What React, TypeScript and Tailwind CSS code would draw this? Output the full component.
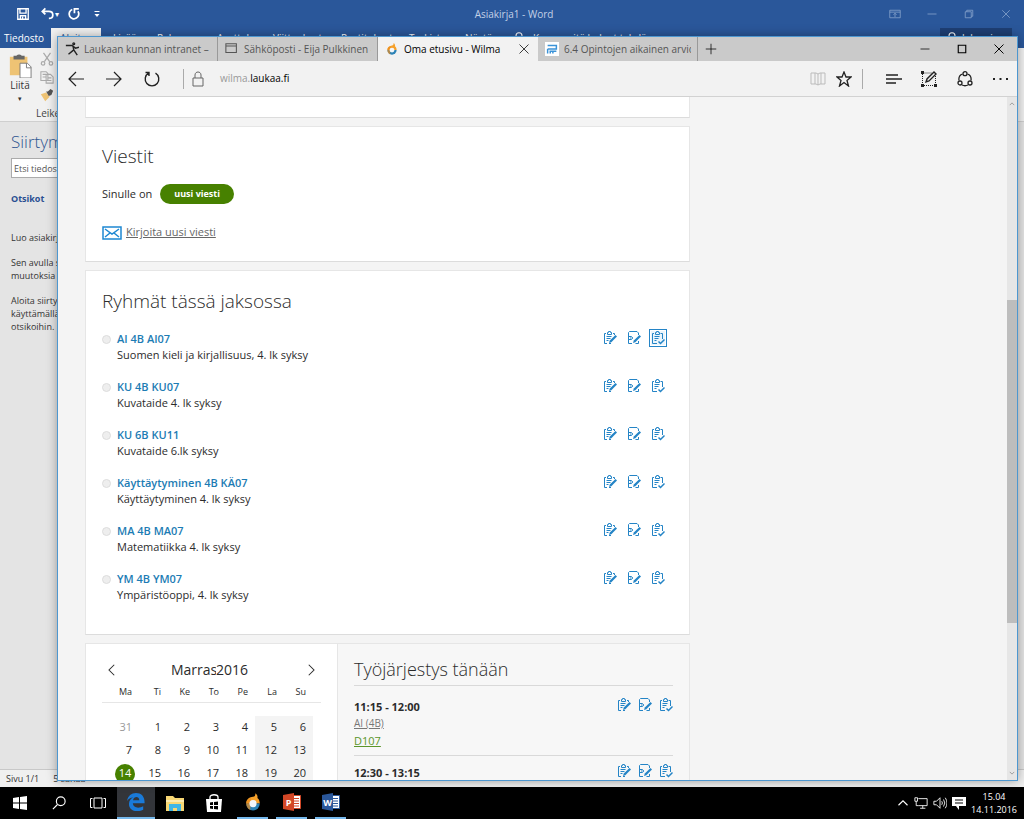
import React from "react";

type Kids = { children: React.ReactNode };

function Icon({ box = "0 0 16 16", className, children, width = 1 }: Kids & { box?: string; className: string; width?: number }) {
  return (
    <svg viewBox={box} className={`shrink-0 ${className}`} fill="none" stroke="currentColor" strokeWidth={width} aria-hidden="true">
      {children}
    </svg>
  );
}

const wordTabs = [
  ["Lisää", "w-11"],
  ["Rakenne", "w-15"],
  ["Asettelu", "w-14"],
  ["Viittaukset", "w-17"],
  ["Postitukset", "w-17"],
  ["Tarkista", "w-14"],
  ["Näytä", "w-12"],
];

function WordWindow() {
  return (
    <div className="flex h-full flex-col bg-[#e4e4e4] text-[10px] text-[#333]">
      <header className="shrink-0 bg-[#2a579a] text-white">
        <div className="flex h-7 items-center">
          <div className="flex flex-1 items-center pl-4">
            <button aria-label="Tallenna" className="mr-[11px]">
              <Icon className="h-3.5 w-3.5" width={1.5}><path d="M2 2h12v12H2zM4.500 2v5h7V2M5 14v-4h6v4M7.500 11v3" /></Icon>
            </button>
            <button aria-label="Kumoa">
              <Icon className="h-3.5 w-3.5" width={2}><path d="M5 1.500 1.500 5 5 8.500M2 5h7c6 0 6 8 0 8" /></Icon>
            </button>
            <span className="mr-2 text-[8px]">▾</span>
            <button aria-label="Toista" className="mr-3">
              <Icon className="h-3.5 w-3.5" width={2}><path d="M6 2.800a5.500 5.500 0 1 0 6.500 2M8.500 7V2h5" /></Icon>
            </button>
            <Icon className="h-2 w-2" width={2}><path d="M3 3h10" /><path d="M3 8h10l-5 6z" fill="currentColor" stroke="none" /></Icon>
          </div>
          <span className="text-[#c3d1e7]">Asiakirja1 - Word</span>
          <div className="flex flex-1 items-center justify-end gap-[25px] pr-3 text-[#8ea8cf]">
            <Icon className="h-3 w-3"><path d="M1 3h14v10H1zM1 5.500h14M8 12V7M6 9l2-2 2 2" /></Icon>
            <Icon className="h-3 w-3"><path d="M2 8h12" /></Icon>
            <Icon className="h-3 w-3"><path d="M3 5h8v8H3zM5 5V3h8v8h-2" /></Icon>
            <Icon className="h-3 w-3"><path d="m3 3 10 10M13 3 3 13" /></Icon>
          </div>
        </div>
        <nav className="flex h-5 items-center">
          <span className="w-[51px] pl-1">Tiedosto</span>
          <span className="flex h-5 w-[50px] items-center justify-center bg-[#f1f1f1] text-[#2a579a]">Aloitus</span>
          <span className="w-3" />
          {wordTabs.map(([name, w]) => <span key={name} className={w}>{name}</span>)}
          <Icon className="mr-2 h-3 w-3" width={1.5}><circle cx="8" cy="5" r="4" /><path d="M6 9v5h4V9" /></Icon>
          <span className="flex-1">Kerro, mitä haluat tehdä</span>
          <button className="mr-3 flex h-5 w-[72px] items-center gap-1 bg-[#1e3f74] pl-1.5">
            <Icon className="h-3 w-3" width={1.5}><circle cx="8" cy="5" r="4" /><path d="M2 15c1-6 11-6 12 0" /></Icon>
            Jakaminen
          </button>
        </nav>
      </header>
      <div className="flex h-[74px] shrink-0 border-b border-[#cfcfcf] bg-[#f1f1f1]">
        <div className="flex w-10 flex-col items-center pt-1.5">
          <svg viewBox="0 0 24 26" className="h-6 w-6" aria-hidden="true">
            <path d="M1 3h19v20H1z" fill="#eec374" />
            <path d="M5 2h3q3-3 6 0h3v4H5z" fill="#666" />
            <path d="M12 10h8l4 4v12H12z" fill="#fff" stroke="#777" />
            <path d="M19 10v5h5" fill="none" stroke="#777" />
          </svg>
          <span>Liitä</span>
          <span className="text-[7px] leading-3">▾</span>
        </div>
        <div className="flex flex-col gap-1 pt-1 text-[#aaa]">
          <Icon className="h-3.5 w-3.5" width={1.4}><path d="m4 1 7 10M12 1 5 11" /><circle cx="3.500" cy="13" r="2" /><circle cx="12.500" cy="13" r="2" /></Icon>
          <Icon className="h-3.5 w-3.5" width={1.2}><path d="M1 2h6l2 2v8H1zM3 5h4M3 8h4M7 5h5l3 3v7H7zM9 9h4M9 12h4" /></Icon>
          <svg viewBox="0 0 16 16" className="h-3.5 w-3.5" aria-hidden="true"><path d="m1 7 6-2 4 5-5 5z" fill="#eec374" /><path d="m7 4 3 5 3-1 2-5-3-2-3 3z" fill="#555" /></svg>
          <span className="-ml-1 text-[#444]">Leikepöytä</span>
        </div>
      </div>
      <aside className="flex-1 pt-1.5 pl-[11px] text-[9px] leading-[13px]">
        <h2 className="text-[17px] leading-7 font-light text-[#2f5590]">Siirtyminen</h2>
        <input aria-label="Etsi tiedostosta" placeholder="Etsi tiedostosta" className="mt-0.5 block h-5 w-40 border border-[#ababab] bg-white px-0.5 text-[9px] placeholder:text-[#555]" />
        <h3 className="mt-3.5 mb-[26px] font-bold text-[#2a4f92]">Otsikot</h3>
        <p className="mb-3">Luo asiakirjan jäsennys.</p>
        <p className="mb-3">Sen avulla seuraat<br />muutoksia helposti.</p>
        <p>Aloita siirtymällä<br />käyttämällä tyylejä<br />otsikoihin.</p>
      </aside>
      <footer className="flex h-[18px] shrink-0 items-center gap-3.5 border-t border-[#c8c8c8] bg-[#f0f0f0] pl-1.5 text-[9px]">
        <span>Sivu 1/1</span><span>5 sanaa</span>
      </footer>
    </div>
  );
}

function BrowserTab({ title, icon, active }: { title: string; icon: React.ReactNode; active?: boolean }) {
  return (
    <div className={active ? "flex w-40 min-w-0 items-center gap-1.5 bg-[#f2f2f2] px-2 text-black" : "flex w-40 min-w-0 items-center gap-[5px] border-r border-[#999] pr-1.5 pl-[7px] text-[#555]"}>
      {icon}
      <span className="flex-1 overflow-hidden whitespace-nowrap">{title}</span>
      {active && <button aria-label="Sulje välilehti"><Icon className="h-3 w-3"><path d="m2 2 12 12M14 2 2 14" /></Icon></button>}
    </div>
  );
}

function Wilma({ className }: { className: string }) {
  return (
    <svg viewBox="0 0 20 22" className={`shrink-0 ${className}`} aria-hidden="true">
      <path d="M1.500 13C1.500 7 6 5 10 4.500c2.500-.5 3-2 3-4.500 2.500 2 3 4 2.500 6 2 1.500 3 4 3 7z" fill="#f6a12a" />
      <path d="M1.500 13a8.500 8.500 0 0 0 17 0z" fill="#2c83b7" />
      <path d="M1.500 13c0 4 2 7 5 8l1-15c-4 1-6 3-6 7z" fill="#e98c1c" opacity=".7" />
      <circle cx="10" cy="13" r="4.500" fill="#f2f6fa" />
    </svg>
  );
}

function Toolbar() {
  return (
    <div className="flex h-9 shrink-0 items-center border-b border-[#d2d2d2] bg-[#f2f2f2] px-2 pl-2.5 text-[10px] text-[#222]">
      <button aria-label="Takaisin" className="mr-[22px]"><Icon className="h-4 w-4" width={1.2}><path d="M16 8H1M8 1 1 8l7 7" /></Icon></button>
      <button aria-label="Eteenpäin" className="mr-[22px]"><Icon className="h-4 w-4" width={1.2}><path d="M0 8h15M8 1l7 7-7 7" /></Icon></button>
      <button aria-label="Päivitä"><Icon className="h-4 w-4" width={1.4}><path d="M4.500 2.200a6.800 6.800 0 1 0 7 0M1.500 1.500h3.500V5" /></Icon></button>
      <span className="mr-2 ml-[23px] h-5 w-px bg-[#aaa]" />
      <Icon className="mr-4 h-4 w-3 text-[#666]" box="0 0 12 16"><path d="M1 7h10v8H1zM3 7V4c0-4 6-4 6 0v3" /></Icon>
      <span className="flex-1 text-[#999]">wilma.<span className="text-black">laukaa.fi</span></span>
      <Icon className="mr-2.5 h-4 w-4 text-[#bbb]"><path d="M1 2h5l2 1 2-1h5v11h-5l-2 1-2-1H1zM8 3v11M5 2v11M11 2v11" /></Icon>
      <button aria-label="Lisää suosikkeihin"><Icon className="h-4 w-4" width={1.3}><path d="m8 1 2 5h5l-4 3.500L12.500 15 8 11.500 3.500 15 5 9.500 1 6h5z" /></Icon></button>
      <span className="mr-[23px] ml-2.5 h-5 w-px bg-[#aaa]" />
      <button aria-label="Keskus" className="mr-[19px]"><Icon className="h-4 w-4" width={1.3}><path d="M0 4h12M0 8h16M0 12h10" /></Icon></button>
      <button aria-label="Muistiinpano" className="mr-5"><Icon className="h-4 w-4"><path d="M1.500 14V2h10M14.500 5v9.500h-13" strokeDasharray="1 1" /><path d="M0 0h3v3H0zM0 13h3v3H0zM13 13h3v3h-3z" fill="currentColor" stroke="none" /><path d="m5 11 1-3 7-7 2 2-7 7z" fill="#f2f2f2" strokeWidth="1.400" /></Icon></button>
      <button aria-label="Jaa" className="mr-5"><Icon className="h-4 w-4" width={1.3}><path d="M5.500 3C2.500 4 1.500 6 2 9.500M10.500 3c3 1 4 3 3.500 6.500M5 14q3 1.500 6 0" /><circle cx="8" cy="2.700" r="2" /><circle cx="3" cy="12" r="2" /><circle cx="13" cy="12" r="2" /></Icon></button>
      <button aria-label="Lisää toimintoja"><Icon className="h-4 w-4"><path d="M0 7h2v2H0zM6.500 7h2v2h-2zM13 7h2v2h-2z" fill="currentColor" stroke="none" /></Icon></button>
    </div>
  );
}

function Actions({ compact, focused }: { compact?: boolean; focused?: boolean }) {
  return (
    <div className={compact ? "flex gap-[7px] text-[#2484c6]" : "flex gap-2.5 text-[#2484c6]"}>
      <a href="#arviointi" aria-label="Arviointi"><Icon box="0 0 14 14" className="h-3.5 w-3.5"><path d="M3 2.500H1.500v10H4M10 2.500h1.500V4M6 12.500h2" /><path d="M4.500 3.500v-2h1v-1h2v1h1v2z" /><path d="M3.500 5.500h5M3.500 7.500h4M3.500 9.500h2" /><path d="m6 12 .8-2.500L12.500 4 14 5.500 8.300 11.200z" fill="currentColor" stroke="none" /></Icon></a>
      <a href="#tuntimerkinnat" aria-label="Tuntimerkinnät"><Icon box="0 0 14 14" className="h-3.5 w-3.5"><path d="M11.500 4V2L10 .5H2.500l-1 1v11H5M8.500 12.500h3V10" /><path d="M2 5.500h2.500q2.500 1.500 0 3H2M3 7h1.500" /><path d="m6 12 .8-2.500L12.500 4 14 5.500 8.300 11.200z" fill="currentColor" stroke="none" /></Icon></a>
      <a href="#poissaolot" aria-label="Poissaolot" className={focused ? "bg-[#eaf5fc] outline outline-offset-1 outline-[#2484c6]" : ""}><Icon box="0 0 14 14" className="h-3.5 w-3.5"><path d="M3 2.500H1.500v10H6M9.500 2.500h2V8" /><path d="M4.500 3.500v-2h1v-1h2v1h1v2z" /><path d="M3.500 5.500h5M3.500 7.500h4M3.500 9.500h2" /><path d="m7.500 10.500 2 2L13.500 8.500" strokeWidth="1.500" /></Icon></a>
    </div>
  );
}

const groups = [
  ["AI 4B AI07", "Suomen kieli ja kirjallisuus, 4. lk syksy"],
  ["KU 4B KU07", "Kuvataide 4. lk syksy"],
  ["KU 6B KU11", "Kuvataide 6.lk syksy"],
  ["Käyttäytyminen 4B KÄ07", "Käyttäytyminen 4. lk syksy"],
  ["MA 4B MA07", "Matematiikka 4. lk syksy"],
  ["YM 4B YM07", "Ympäristöoppi, 4. lk syksy"],
];

const weeks = [
  [31, 1, 2, 3, 4, 5, 6],
  [7, 8, 9, 10, 11, 12, 13],
  [14, 15, 16, 17, 18, 19, 20],
];

function Calendar() {
  return (
    <section className="w-[252px] shrink-0 border-r border-[#e6e6e6] bg-white px-4 pt-4">
      <div className="flex h-5 items-center justify-between px-1">
        <button aria-label="Edellinen kuukausi"><Icon className="h-3 w-3" width={1.4}><path d="M11 1 4 8l7 7" /></Icon></button>
        <div className="flex text-[14px] leading-5">
          <select aria-label="Kuukausi" className="w-[45px] appearance-none overflow-hidden"><option>Marraskuu</option></select>
          <select aria-label="Vuosi" className="w-9 appearance-none"><option>2016</option></select>
        </div>
        <button aria-label="Seuraava kuukausi"><Icon className="h-3 w-3" width={1.4}><path d="m5 1 7 7-7 7" /></Icon></button>
      </div>
      <table className="w-full table-fixed text-right text-[11px]">
        <colgroup>
          <col className="w-2" />
          {weeks[0].map((day) => <col key={day} className="w-[29px]" />)}
          <col />
        </colgroup>
        <thead>
          <tr className="h-[22px] border-b border-[#e6e6e6] text-[9px]">
            <td />
            {["Ma", "Ti", "Ke", "To", "Pe", "La", "Su"].map((d) => <th key={d} className="pt-0.5 pr-[7px] font-normal">{d}</th>)}
            <td />
          </tr>
          <tr className="h-3.5"><td colSpan={9} /></tr>
        </thead>
        <tbody>
          {weeks.map((week) => (
            <tr key={week[0]} className="h-[23px]">
              <td />
              {week.map((day, i) => (
                <td key={day} className={i > 4 ? "bg-[#f4f4f4] pr-[7px]" : day === 14 ? "pr-0.5" : day === 31 ? "pr-[7px] text-[#999]" : "pr-[7px]"}>
                  {day === 14 ? <span className="ml-auto flex h-5 w-6 items-center justify-center"><span className="flex h-5 w-5 items-center justify-center rounded-full bg-[#478100] text-white">14</span></span> : day}
                </td>
              ))}
              <td />
            </tr>
          ))}
        </tbody>
      </table>
    </section>
  );
}

function Lesson({ time, first }: { time: string; first?: boolean }) {
  return (
    <div className={first ? "flex items-start justify-between border-t border-[#d9d9d9] pt-3 pb-1.5" : "flex items-start justify-between border-t border-[#d9d9d9] pt-2"}>
      <div className="flex flex-col items-start text-[11px] leading-[17px]">
        <strong className="font-bold">{time}</strong>
        <a href="#ai" className="text-[10px] text-[#777] underline">AI (4B)</a>
        <a href="#d107" className="text-[#5b962a] underline">D107</a>
      </div>
      <Actions compact />
    </div>
  );
}

const card = "border border-[#e6e6e6] border-b-[#dcdcdc] bg-white px-4";

function WilmaPage() {
  return (
    <main className="flex min-h-0 flex-1 bg-[#f4f4f4] text-[#2b2b2b]">
      <div className="min-w-0 flex-1 overflow-hidden pl-[27px]">
        <div className="flex max-w-[605px] flex-col gap-2 text-[11px]">
          <div className="h-[21px] border border-t-0 border-[#e6e6e6] border-b-[#dcdcdc] bg-white" />
          <section className={`${card} pt-[15px] pb-4`}>
            <h2 className="text-[19px] leading-7 font-light">Viestit</h2>
            <p className="mt-3.5 flex h-5 items-center gap-2">Sinulle on <a href="#uusi" className="rounded-full bg-[#478100] px-3.5 text-[9px] leading-5 font-bold text-white">uusi viesti</a></p>
            <a href="#kirjoita" className="mt-4 flex h-[25px] items-center gap-1 text-[#666] underline">
              <Icon className="h-3.5 w-5 text-[#1e88d2]" box="0 0 20 14" width={1.5}><path d="M1 1h18v12H1zM3 3l7 5 7-5M3 11l5-4M17 11l-5-4" /></Icon>
              Kirjoita uusi viesti
            </a>
          </section>
          <section className={`${card} pt-4 pb-[31px]`}>
            <h2 className="text-[19px] leading-7 font-light">Ryhmät tässä jaksossa</h2>
            <ul className="mt-4 flex flex-col gap-4">
              {groups.map(([name, info], i) => (
                <li key={name} className="flex items-start gap-1.5 leading-4">
                  <span className="mt-1 h-[9px] w-[9px] rounded-full border border-[#ddd] bg-[#eee]" />
                  <div className="flex-1">
                    <a href="#ryhma" className="block font-semibold text-[#1c7cb4]">{name}</a>
                    <p>{info}</p>
                  </div>
                  <div className="mr-2"><Actions focused={i === 0} /></div>
                </li>
              ))}
            </ul>
          </section>
          <div className="flex border border-[#e6e6e6] bg-[#f7f7f7]">
            <Calendar />
            <section className="flex-1 px-4 pt-[11px]">
              <h2 className="mb-0.5 text-[18px] leading-7 font-light">Työjärjestys tänään</h2>
              <Lesson first time="11:15 - 12:00" />
              <Lesson time="12:30 - 13:15" />
            </section>
          </div>
        </div>
      </div>
      <div className="flex w-2.5 shrink-0 flex-col items-center bg-[#e6e6e6] py-1 text-[#888]" aria-hidden="true">
        <Icon className="h-1.5 w-1.5" width={2}><path d="m2 11 6-6 6 6" /></Icon>
        <div className="flex-[193]" />
        <div className="w-full flex-[323] bg-[#bdbdbd]" />
        <div className="flex-[147]" />
        <Icon className="h-1.5 w-1.5" width={2}><path d="m2 5 6 6 6-6" /></Icon>
      </div>
    </main>
  );
}

function BrowserWindow() {
  return (
    <div className="absolute top-9 right-[6px] bottom-1.5 left-[57px] flex flex-col overflow-hidden border border-[#4d97d0] bg-[#f4f4f4] shadow-[0_0_10px_rgba(0,0,0,0.35)]">
      <div className="flex h-6 shrink-0 bg-[#cacaca] text-[10px]">
        <BrowserTab title="Laukaan kunnan intranet – Sivusto" icon={<Icon className="h-3.5 w-3.5 text-[#222]" width={1.6}><path d="M1 4h7l4 3 4-1M9 4l1 5-6 5M10 9l4 6" /><circle cx="10" cy="2" r="1" /></Icon>} />
        <BrowserTab title="Sähköposti - Eija Pulkkinen - Outlook" icon={<Icon className="h-3.5 w-3.5" width={1.2}><path d="M1 2h12v10H1zM1 4.500h12" /></Icon>} />
        <BrowserTab active title="Oma etusivu - Wilma" icon={<Wilma className="h-3 w-3" />} />
        <BrowserTab title="6.4 Opintojen aikainen arviointi" icon={<svg viewBox="0 0 16 16" className="h-3.5 w-3.5 shrink-0 bg-white" aria-hidden="true"><path d="M3 4h10v4H3M3 8v5M6 13v-2.500h7M9 10.500V13" stroke="#3b93d8" strokeWidth="1.700" fill="none" /></svg>} />
        <button aria-label="Uusi välilehti" className="ml-[7px]"><Icon className="h-3 w-3"><path d="M8 1v14M1 8h14" /></Icon></button>
        <div className="flex flex-1 items-center justify-end gap-[25px] pr-3">
          <button aria-label="Pienennä"><Icon className="h-3 w-3"><path d="M2 8h12" /></Icon></button>
          <button aria-label="Suurenna"><Icon className="h-3 w-3" width={1.5}><path d="M3 3h10v10H3z" /></Icon></button>
          <button aria-label="Sulje"><Icon className="h-3 w-3" width={1.3}><path d="m2 2 12 12M14 2 2 14" /></Icon></button>
        </div>
      </div>
      <Toolbar />
      <WilmaPage />
    </div>
  );
}

function OfficeIcon({ letter, color }: { letter: string; color: string }) {
  return (
    <svg viewBox="0 0 18 18" className="h-[18px] w-[18px]" aria-hidden="true">
      <path d="M8 2.500h9.500v13H8z" fill="#fff" stroke={color} />
      <path d="M11 5.500h5M11 8h5M11 10.500h5M11 13h5" stroke={color} />
      <path d="M0 2 11 0v18L0 16z" fill={color} />
      <text x="5.500" y="12.500" textAnchor="middle" fontSize="9" fontWeight="700" fill="#fff">{letter}</text>
    </svg>
  );
}

function TaskButton({ label, running, active, children }: Kids & { label: string; running?: boolean; active?: boolean }) {
  return (
    <button
      aria-label={label}
      className={active ? "flex h-8 w-[38px] items-center justify-center border-b-2 border-[#76b9ed] bg-[#33353a]" : running ? "mx-1 flex h-8 w-[31px] items-center justify-center border-b-2 border-[#76b9ed]" : "flex h-8 w-[39px] items-center justify-center"}
    >
      {children}
    </button>
  );
}

function Taskbar() {
  return (
    <footer className="flex h-8 shrink-0 items-center bg-black text-white">
      <TaskButton label="Käynnistä"><svg viewBox="0 0 14 14" className="h-3.5 w-3.5" fill="#fff" aria-hidden="true"><path d="m0 2 6-.9v5.400H0zM7 1l7-1v6.500H7zM0 7.500h6v5.400L0 12zM7 7.500h7V14l-7-1z" /></svg></TaskButton>
      <TaskButton label="Haku"><Icon className="h-3.5 w-3.5" width={1.3}><circle cx="10" cy="6" r="5" /><path d="m6 10-5 5" /></Icon></TaskButton>
      <TaskButton label="Tehtävänäkymä"><Icon className="h-4 w-4"><path d="M4 3h8v10H4zM2.500 3.500h-2v9h2M13.500 3.500h2v9h-2" /></Icon></TaskButton>
      <TaskButton label="Edge" active><svg viewBox="0 0 20 20" className="h-[18px] w-[18px]" aria-hidden="true"><path d="M0 9C1 3 5 0 10 0c6 0 10 4 9.500 11.500H6.500c.5 6 8 5.500 11.500 3.200v4C11 22 2 20 2.200 12 2.300 8 4.500 6 7 5 4 5.200 1.500 6.500 0 9zm6.700-1h7C13.500 3 7.500 3.500 6.700 8z" fill="#1a7ad8" /></svg></TaskButton>
      <TaskButton label="Resurssienhallinta"><svg viewBox="0 0 18 16" className="h-4 w-[18px]" aria-hidden="true"><path d="M0 1h7l2 2h9v13H0z" fill="#f8d775" /><path d="M0 5h18v2H0z" fill="#fbeab0" /><path d="M3 16V9h12v7h-4v-3H7v3z" fill="#3fb6e6" /></svg></TaskButton>
      <TaskButton label="Kauppa"><svg viewBox="0 0 18 18" className="h-[18px] w-[18px]" aria-hidden="true"><path d="M5 6V3c0-3 8-3 8 0v3" fill="none" stroke="#fff" strokeWidth="1.300" /><path d="M1 5h16l-1 13H2z" fill="#fff" /><path d="m5 8.500 3-.4V11H5zM9 8l4-.5V11H9zM5 12h3v3l-3-.4zM9 12h4v3.500L9 15z" fill="#000" /></svg></TaskButton>
      <TaskButton label="Wilma" running><Wilma className="h-[18px] w-4" /></TaskButton>
      <TaskButton label="PowerPoint" running><OfficeIcon letter="P" color="#d24726" /></TaskButton>
      <TaskButton label="Word" running><OfficeIcon letter="W" color="#2a579a" /></TaskButton>
      <div className="flex flex-1 items-center justify-end gap-[5px] pr-[7px]">
        <Icon className="h-3 w-3" width={1.5}><path d="m2 11 6-6 6 6" /></Icon>
        <Icon className="h-3.5 w-3.5"><path d="M5 3h10v8H5M10 11v3M7 14h6M1 2h3v4H1zM2.500 6v5H5" /></Icon>
        <Icon className="h-3.5 w-3.5"><path d="M1 6h3l4-4v12l-4-4H1zM10 6q1.500 2 0 4M12 4q3 4 0 8M14 2q4 6 0 12" /></Icon>
        <svg viewBox="0 0 14 14" className="h-3.5 w-3.5" aria-hidden="true"><path d="M0 1h14v9H7v4l-3-4H0z" fill="#fff" /><path d="M3 4h8M3 7h8" stroke="#000" /></svg>
        <time className="text-center text-[9px] leading-[13px]">15.04<br />14.11.2016</time>
      </div>
    </footer>
  );
}

export default function App() {
  return (
    <div className="flex h-screen flex-col overflow-hidden font-['Open_Sans','Noto_Sans',sans-serif]">
      <div className="relative min-h-0 flex-1">
        <WordWindow />
        <BrowserWindow />
      </div>
      <Taskbar />
    </div>
  );
}
